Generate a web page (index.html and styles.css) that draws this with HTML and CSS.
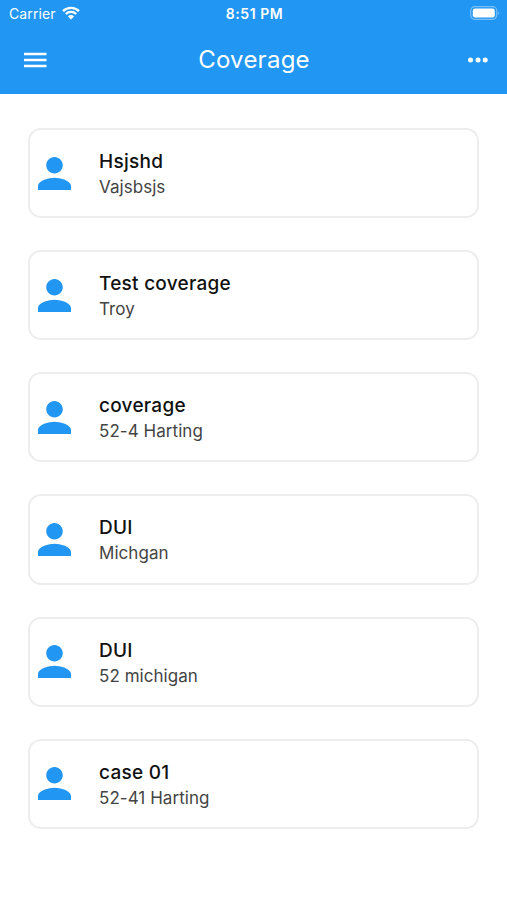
FILE: index.html
```html
<!DOCTYPE html>
<html lang="en">
<head>
<meta charset="utf-8">
<title>Coverage</title>
<link rel="stylesheet" href="styles.css">
</head>
<body>
<svg width="0" height="0" class="defs"><symbol id="person" viewBox="4 4 16 16"><path d="M12 12c2.21 0 4-1.79 4-4s-1.79-4-4-4-4 1.79-4 4 1.79 4 4 4zm0 2c-2.67 0-8 1.34-8 4v2h16v-2c0-2.66-5.33-4-8-4z"/></symbol></svg>
<header class="header">
  <div class="status">
    <div class="carrier"><span>Carrier</span><svg class="wifi" viewBox="0 0 18 14"><path d="M1 5.1a11.6 11.6 0 0 1 16 0M3.8 8a7.5 7.5 0 0 1 10.4 0" fill="none" stroke="#fff" stroke-width="2.4"/><path d="M9 13.5 5.9 10.4a4.5 4.5 0 0 1 6.2 0z" fill="#fff"/></svg></div>
    <span class="time">8:51 PM</span>
    <svg class="battery" viewBox="0 0 30 14"><rect x=".7" y=".7" width="26" height="12.6" rx="4" fill="none" stroke="#fff" stroke-opacity=".4" stroke-width="1.2"/><rect x="2.8" y="2.4" width="22" height="9.2" rx="2.3" fill="#fff"/><path d="M28.3 5.2q2 1.8 0 3.6z" fill="#fff" opacity=".5"/></svg>
  </div>
  <nav class="bar">
    <svg class="menu" viewBox="0 0 23 16"><path d="M0 1.9h22.5M0 8h22.5M0 14.1h22.5" stroke="#fff" stroke-width="2.5"/></svg>
    <h1>Coverage</h1>
    <svg class="more" viewBox="0 0 20 6"><circle cx="2.5" cy="3" r="2.5"/><circle cx="10" cy="3" r="2.5"/><circle cx="17.2" cy="3" r="2.5"/></svg>
  </nav>
</header>
<main class="list">
  <article class="card"><svg class="avatar"><use href="#person"/></svg><div><h2>Hsjshd</h2><p>Vajsbsjs</p></div></article>
  <article class="card"><svg class="avatar"><use href="#person"/></svg><div><h2>Test coverage</h2><p>Troy</p></div></article>
  <article class="card"><svg class="avatar"><use href="#person"/></svg><div><h2>coverage</h2><p>52-4 Harting</p></div></article>
  <article class="card"><svg class="avatar"><use href="#person"/></svg><div><h2>DUI</h2><p>Michgan</p></div></article>
  <article class="card"><svg class="avatar"><use href="#person"/></svg><div><h2>DUI</h2><p>52 michigan</p></div></article>
  <article class="card"><svg class="avatar"><use href="#person"/></svg><div><h2>case 01</h2><p>52-41 Harting</p></div></article>
</main>
</body>
</html>
```
FILE: styles.css
```css
* { box-sizing: border-box; margin: 0; padding: 0; }
body { height: 900px; background: #fff; font-family: Inter, sans-serif; }
svg { display: block; }
.defs { display: none; }
.header { height: 94px; background: #2196f3; color: #fff; }
.status { height: 27px; padding: 0 7px 0 9px; display: grid; grid-template-columns: 1fr auto 1fr; align-items: center; font-size: 14px; line-height: 27px; }
.carrier { display: flex; align-items: center; gap: 6px; letter-spacing: .1px; }
.wifi { width: 18px; height: 14px; margin-top: -2px; }
.time { font-weight: 600; font-size: 14px; letter-spacing: .55px; }
.battery { width: 30px; height: 14px; justify-self: end; margin-top: -1px; }
.bar { height: 65px; padding: 0 19px 0 24px; display: grid; grid-template-columns: 1fr auto 1fr; align-items: center; }
.bar h1 { font-size: 24px; font-weight: 400; letter-spacing: .25px; margin-left: -4px; }
.menu { width: 23px; height: 16px; }
.more { width: 20px; height: 6px; justify-self: end; fill: #fff; }
.list { padding: 34px 28px 0; display: flex; flex-direction: column; gap: 32px; }
.card { width: 451px; height: 90.17px; border: 2px solid #ededed; border-radius: 13px; display: flex; align-items: center; gap: 28px; padding-left: 8px; }
.avatar { width: 33px; height: 33px; fill: #2196f3; }
.card h2 { font-size: 19px; font-weight: 500; line-height: 25px; letter-spacing: .26px; color: #111; padding-top: 1.8px; }
.card p { font-size: 17px; line-height: 24px; color: #444; letter-spacing: .05px; padding-top: 1px; }
```
